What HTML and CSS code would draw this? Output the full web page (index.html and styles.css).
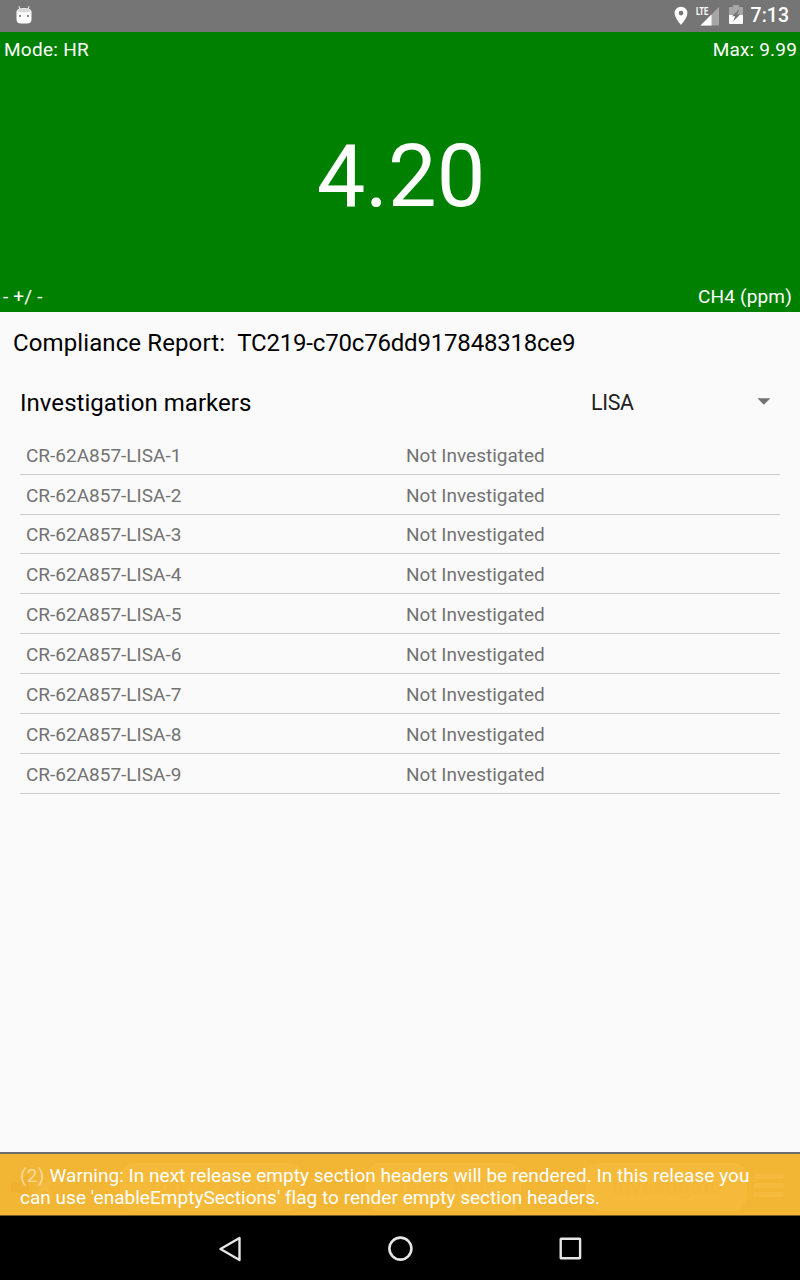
FILE: index.html
```html
<!DOCTYPE html>
<html lang="en">
<head>
<meta charset="utf-8">
<title>Compliance Report</title>
<link rel="stylesheet" href="styles.css">
</head>
<body>
<div class="screen">
  <header class="status">
    <svg class="droid" width="16" height="20" viewBox="0 0 16 20"><path d="M3 1l1 4M13 1l-1 4" stroke="#e8e8e8" stroke-width="1"/><path d="M.5 6.500Q1 3 8 3t7.500 3.500V14q0 4.500-4.500 4.500H5Q.5 18.500.5 14z" fill="#fff"/><path d="M1 6.200Q2 3.500 8 3.500t7 2.700Q12 7.500 8 7.500T1 6.200z" fill="#d8d8d8"/><circle cx="4" cy="11" r="1" fill="#666"/><circle cx="12" cy="11" r="1" fill="#666"/></svg>
    <div class="status-icons">
      <svg width="14" height="20" viewBox="0 0 14 20"><path fill-rule="evenodd" d="M7 .7A6.400 6.400 0 0 0 .6 7.100C.6 12 7 19 7 19s6.400-7 6.400-11.900A6.400 6.400 0 0 0 7 .7zm0 4.100a2.300 2.300 0 1 1 0 4.600 2.300 2.300 0 0 1 0-4.600z" fill="#fff"/></svg>
      <div class="signal">
        <svg width="20" height="19" viewBox="0 0 20 19"><path d="M19 0v18.500H.5z" fill="#a6a6a6"/><path d="M11.500 7.500v11H.5z" fill="#fff"/></svg>
        <span class="lte">LTE</span>
      </div>
      <svg class="battery" width="14" height="20" viewBox="0 0 14 20"><path d="M4 0h6v2h3q1 0 1 1v7H0V3q0-1 1-1h3z" fill="#a6a6a6"/><path d="M0 10h14v8q0 1-1 1H1q-1 0-1-1z" fill="#fff"/><path d="M10.500 4L3 11.200h3.200L4 16.500l7.300-7H8z" fill="#757575"/></svg>
      <span class="clock">7:13</span>
    </div>
  </header>
  <section class="reading">
    <div class="line"><span class="mode">Mode: HR</span><span>Max: 9.99</span></div>
    <div class="value">4.20</div>
    <div class="line low"><span>- +/ -</span><span>CH4 (ppm)</span></div>
  </section>
  <main class="content">
    <h1 class="report">Compliance Report:&nbsp; <span class="report-id">TC219-c70c76dd917848318ce9</span></h1>
    <div class="filter">
      <h2 class="heading">Investigation markers</h2>
      <div class="picker"><span>LISA</span><svg width="14" height="7" viewBox="0 0 14 7"><path d="M.4.200h13L6.900 6.800z" fill="#737373"/></svg></div>
    </div>
    <div class="list">
      <div class="row"><span>CR-62A857-LISA-1</span><span>Not Investigated</span></div>
      <div class="row"><span>CR-62A857-LISA-2</span><span>Not Investigated</span></div>
      <div class="row"><span>CR-62A857-LISA-3</span><span>Not Investigated</span></div>
      <div class="row"><span>CR-62A857-LISA-4</span><span>Not Investigated</span></div>
      <div class="row"><span>CR-62A857-LISA-5</span><span>Not Investigated</span></div>
      <div class="row"><span>CR-62A857-LISA-6</span><span>Not Investigated</span></div>
      <div class="row"><span>CR-62A857-LISA-7</span><span>Not Investigated</span></div>
      <div class="row"><span>CR-62A857-LISA-8</span><span>Not Investigated</span></div>
      <div class="row"><span>CR-62A857-LISA-9</span><span>Not Investigated</span></div>
    </div>
  </main>
  <footer class="toolbar">
    <svg class="mute" width="42" height="30" viewBox="0 0 42 30"><path d="M0 10h8l10-8v25l-10-7H0z" fill="#efb12f"/><path d="M27 9l13 13M40 9L27 22" stroke="#f5ba3d" stroke-width="4"/></svg>
    <div class="button toggle">Toggle Mode</div>
    <div class="button reset">Reset Max</div>
    <div class="button investigate">Investigate</div>
    <div class="menu"><i></i><i></i><i></i></div>
    <div class="warning"><span class="count">(2)</span> Warning: In next release empty section headers will be rendered. In this release you can use 'enableEmptySections' flag to render empty section headers.</div>
  </footer>
  <nav class="nav">
    <svg width="24" height="26" viewBox="0 0 24 26"><path d="M21.500 2v22L2.500 13z" fill="none" stroke="#e6e6e6" stroke-width="2.400" stroke-linejoin="round"/></svg>
    <svg width="26" height="26" viewBox="0 0 26 26"><circle cx="13.400" cy="12.600" r="11" fill="none" stroke="#e6e6e6" stroke-width="2.600"/></svg>
    <svg width="24" height="24" viewBox="0 0 24 24"><rect x="2.700" y="1.800" width="19.400" height="19.400" rx=".5" fill="none" stroke="#e6e6e6" stroke-width="2.400"/></svg>
  </nav>
</div>
</body>
</html>
```
FILE: styles.css
```css
* { box-sizing: border-box; }
body { margin: 0; font-family: Roboto, "Noto Sans", sans-serif; font-size: 19px; line-height: 22px; }
svg { display: block; }
.screen { width: 800px; height: 1280px; display: flex; flex-direction: column; background: #fafafa; }
.status { height: 32px; background: #757575; display: flex; justify-content: space-between; align-items: center; padding: 0 11px 0 16px; }
.droid { margin-top: -2px; }
.status-icons { display: flex; align-items: center; color: #fff; }
.signal { position: relative; margin-left: 12px; }
.lte { position: absolute; left: -4px; top: -2px; font: 700 11.5px/12px "Roboto", sans-serif; transform: scaleX(.66); transform-origin: 0 0; }
.battery { margin: -2px 8px 0 9px; }
.clock { font-weight: 500; font-size: 19.5px; }
.reading { height: 280px; background: #008000; color: #fff; display: flex; flex-direction: column; justify-content: space-between; padding: 7px 3px 4px 4px; }
.line { display: flex; justify-content: space-between; letter-spacing: .17px; }
.mode { letter-spacing: .27px; }
.low { padding-right: 5px; margin-left: -1px; }
.value { font-size: 86.5px; line-height: 100px; text-align: center; padding: 7px 0 0 1px; }
.content { flex: 1; padding: 0 20px; }
.report { margin: 17px 0 0 -7px; font-size: 24px; line-height: 28px; font-weight: 400; color: #000; letter-spacing: .11px; }
.report-id { letter-spacing: -.19px; }
.filter { display: flex; align-items: center; justify-content: space-between; margin-top: 32px; height: 28px; }
.heading { margin: 0; font-size: 24px; line-height: 28px; font-weight: 400; color: #000; letter-spacing: .04px; }
.picker { width: 189px; padding: 0 9px 1px 0; display: flex; align-items: center; justify-content: space-between; color: #212121; font-size: 21.33px; letter-spacing: -.3px; }
.picker svg { margin-top: -2px; }
.list { margin-top: 17.775px; color: #737373; }
.row { height: 39.875px; padding: 2.9px 0 0 6px; border-bottom: 1px solid #ccc; display: grid; grid-template-columns: 380px 1fr; align-items: center; }
.toolbar { position: relative; height: 64px; border-top: 2px solid #6c6c6c; border-bottom: 1px solid #765c22; background: #f2b534; display: flex; align-items: center; padding: 4px 15px 0 11px; }
.button { height: 48px; border-radius: 14px; background: #f6ba3a; color: #f4b737; font-weight: 700; font-size: 22px; display: flex; align-items: center; justify-content: center; }
.toggle { width: 182px; margin-left: 67px; }
.reset { width: 155px; margin-left: 64px; }
.investigate { width: 161px; margin-left: 65px; }
.menu { margin: -3px 0 0 6px; width: 31px; display: grid; gap: 4px; }
.menu i { height: 5px; border-radius: 2px; background: #f6bb3d; }
.warning { position: absolute; inset: 0; padding: 11px 20px 0; color: #fff; letter-spacing: .025px; }
.count { color: #fadb9c; letter-spacing: .3px; }
.nav { height: 64px; background: #000; display: flex; align-items: center; padding: 1px 0 0 218px; }
.nav svg + svg { margin-left: 145px; }
```
